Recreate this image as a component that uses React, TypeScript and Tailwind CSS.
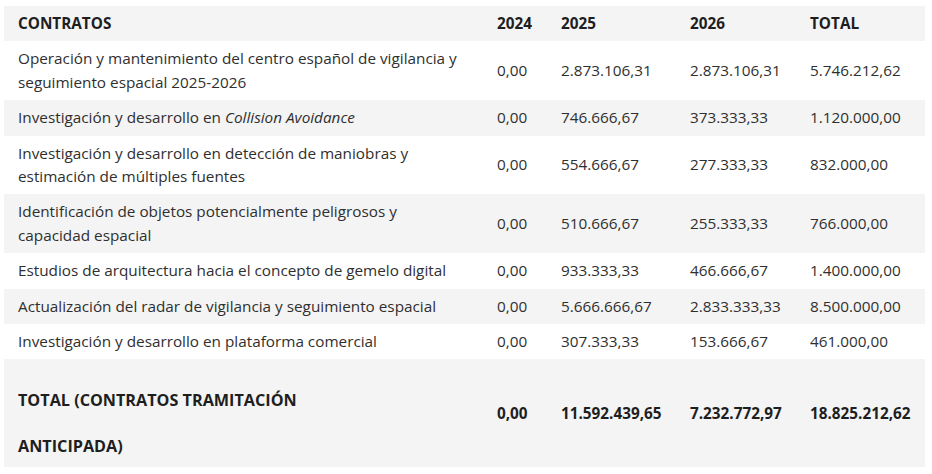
import React from 'react';

interface Row {
  label: React.ReactNode;
  y2024: string;
  y2025: string;
  y2026: string;
  total: string;
}

const ROWS: Row[] = [
  {
    label: 'Operación y mantenimiento del centro español de vigilancia y seguimiento espacial 2025-2026',
    y2024: '0,00',
    y2025: '2.873.106,31',
    y2026: '2.873.106,31',
    total: '5.746.212,62',
  },
  {
    label: (
      <>
        Investigación y desarrollo en <em>Collision Avoidance</em>
      </>
    ),
    y2024: '0,00',
    y2025: '746.666,67',
    y2026: '373.333,33',
    total: '1.120.000,00',
  },
  {
    label: 'Investigación y desarrollo en detección de maniobras y estimación de múltiples fuentes',
    y2024: '0,00',
    y2025: '554.666,67',
    y2026: '277.333,33',
    total: '832.000,00',
  },
  {
    label: 'Identificación de objetos potencialmente peligrosos y capacidad espacial',
    y2024: '0,00',
    y2025: '510.666,67',
    y2026: '255.333,33',
    total: '766.000,00',
  },
  {
    label: 'Estudios de arquitectura hacia el concepto de gemelo digital',
    y2024: '0,00',
    y2025: '933.333,33',
    y2026: '466.666,67',
    total: '1.400.000,00',
  },
  {
    label: 'Actualización del radar de vigilancia y seguimiento espacial',
    y2024: '0,00',
    y2025: '5.666.666,67',
    y2026: '2.833.333,33',
    total: '8.500.000,00',
  },
  {
    label: 'Investigación y desarrollo en plataforma comercial',
    y2024: '0,00',
    y2025: '307.333,33',
    y2026: '153.666,67',
    total: '461.000,00',
  },
];

const cell = 'px-[14px] py-[6px] align-middle';

export default function App() {
  return (
    <div className="bg-white pt-[6px] pl-[4px] pr-[7px] font-['Open_Sans',sans-serif] text-[15.3px] leading-[23.4px] text-[#2f2f2f]">
      <table className="w-[921px] table-fixed border-collapse">
        <colgroup>
          <col className="w-[479px]" />
          <col className="w-[64px]" />
          <col className="w-[129px]" />
          <col className="w-[120px]" />
          <col className="w-[129px]" />
        </colgroup>
        <thead>
          <tr className="bg-[#f4f4f4] text-left font-bold text-[#1e1e1e]">
            <th className={cell}>CONTRATOS</th>
            <th className={cell}>2024</th>
            <th className={cell}>2025</th>
            <th className={cell}>2026</th>
            <th className={cell}>TOTAL</th>
          </tr>
        </thead>
        <tbody>
          {ROWS.map((row, i) => (
            <tr key={i} className={i % 2 === 1 ? 'bg-[#f4f4f4]' : 'bg-white'}>
              <td className={cell}>{row.label}</td>
              <td className={cell}>{row.y2024}</td>
              <td className={cell}>{row.y2025}</td>
              <td className={cell}>{row.y2026}</td>
              <td className={cell}>{row.total}</td>
            </tr>
          ))}
          <tr className="h-[108px] bg-[#f4f4f4] font-bold text-[#1e1e1e]">
            <td className="px-[14px] pt-[18px] pb-0 align-top">
              <div className="mb-[-2px] text-[16.2px] leading-[46px]">
                TOTAL (CONTRATOS TRAMITACIÓN
                <br />
                ANTICIPADA)
              </div>
            </td>
            <td className={cell}>0,00</td>
            <td className={cell}>11.592.439,65</td>
            <td className={cell}>7.232.772,97</td>
            <td className={cell}>18.825.212,62</td>
          </tr>
        </tbody>
      </table>
    </div>
  );
}
